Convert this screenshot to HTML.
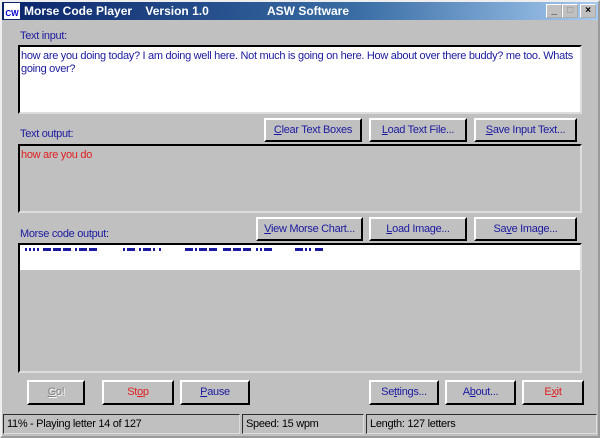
<!DOCTYPE html>
<html><head><style>
*{box-sizing:border-box;margin:0;padding:0}
body{width:600px;height:438px;background:#c0c0c0;font-family:"Liberation Sans",sans-serif;font-size:11px;letter-spacing:-0.3px;position:relative;overflow:hidden}
.a{position:absolute}
.win{left:0;top:0;width:600px;height:438px;border:2px outset #eee}
.title{left:2px;top:2px;width:596px;height:18px;background:linear-gradient(90deg,#0a246a,#3a6ea5 60%,#a6caf0);color:#fff;font-weight:bold;font-size:12px;line-height:18px;letter-spacing:0}
.lbl{color:#1a1aa0;font-size:11px}
.box{border:2px inset #ddd;border-top-color:#404040;border-left-color:#404040}
.btn{background:#c0c0c0;border:2px outset #fff;border-right-color:#404040;border-bottom-color:#404040;text-align:center;line-height:20px;color:#1a1aa0;font-size:11px}
.tb{width:16px;height:14px;top:4px;background:#c0c0c0;border:1px outset #fff;color:#000;font-size:10px;text-align:center;line-height:12px;font-weight:bold}
.sp{border:1px inset #ddd;border-top-color:#808080;border-left-color:#808080;top:414px;height:20px;line-height:18px;padding-left:3px;font-size:11px}
</style></head><body>
<div class="a win"></div>
<div class="a title"><span class="a" style="left:2px;top:1px;width:16px;height:16px;background:#fff;color:#00c;font-size:8px;line-height:22px;text-align:center">CW</span><span class="a" style="left:22px">Morse Code Player&nbsp;&nbsp;&nbsp; Version 1.0</span><span class="a" style="left:265px">ASW Software</span></div>
<div class="a tb" style="left:546px">_</div><div class="a tb" style="left:562px;color:#888">□</div><div class="a tb" style="left:580px">×</div>
<div class="a lbl" style="left:20px;top:30px">Text input:</div>
<div class="a box" style="left:18px;top:45px;width:564px;height:69px;background:#fff;color:#1a1aa0;padding:3px 1px;line-height:13px">how are you doing today? I am doing well here. Not much is going on here. How about over there buddy? me too. Whats going over?</div>
<div class="a btn" style="left:264px;top:118px;width:98px;height:24px"><u>C</u>lear Text Boxes</div>
<div class="a btn" style="left:369px;top:118px;width:98px;height:24px"><u>L</u>oad Text File...</div>
<div class="a btn" style="left:474px;top:118px;width:103px;height:24px"><u>S</u>ave Input Text...</div>
<div class="a lbl" style="left:20px;top:128px">Text output:</div>
<div class="a box" style="left:18px;top:144px;width:564px;height:69px;color:#e02020;padding:3px 1px">how are you do</div>
<div class="a btn" style="left:256px;top:217px;width:107px;height:24px"><u>V</u>iew Morse Chart...</div>
<div class="a btn" style="left:369px;top:217px;width:98px;height:24px"><u>L</u>oad Image...</div>
<div class="a btn" style="left:474px;top:217px;width:103px;height:24px">Sa<u>v</u>e Image...</div>
<div class="a lbl" style="left:20px;top:228px">Morse code output:</div>
<div class="a box" style="left:18px;top:243px;width:564px;height:130px"></div>
<div class="a" style="left:20px;top:245px;width:560px;height:25px;background:#fff"></div>
<svg class="a" style="left:20px;top:245px" width="320" height="12"><g fill="#1a1aa0">
<rect x="5" y="3" width="2" height="3"/><rect x="9" y="3" width="2" height="3"/><rect x="13" y="3" width="2" height="3"/><rect x="17" y="3" width="2" height="3"/>
<rect x="23" y="3" width="8" height="3"/><rect x="33" y="3" width="8" height="3"/><rect x="43" y="3" width="8" height="3"/>
<rect x="55" y="3" width="2" height="3"/><rect x="59" y="3" width="8" height="3"/><rect x="69" y="3" width="8" height="3"/>
<rect x="103" y="3" width="2" height="3"/><rect x="107" y="3" width="8" height="3"/><rect x="119" y="3" width="2" height="3"/><rect x="123" y="3" width="8" height="3"/><rect x="133" y="3" width="2" height="3"/><rect x="139" y="3" width="2" height="3"/>
<rect x="165" y="3" width="8" height="3"/><rect x="175" y="3" width="2" height="3"/><rect x="179" y="3" width="8" height="3"/><rect x="189" y="3" width="8" height="3"/>
<rect x="203" y="3" width="8" height="3"/><rect x="213" y="3" width="8" height="3"/><rect x="223" y="3" width="8" height="3"/>
<rect x="236" y="3" width="2" height="3"/><rect x="240" y="3" width="2" height="3"/><rect x="244" y="3" width="8" height="3"/>
<rect x="275" y="3" width="8" height="3"/><rect x="285" y="3" width="2" height="3"/><rect x="289" y="3" width="2" height="3"/><rect x="295" y="3" width="8" height="3"/>
</g></svg>
<div class="a btn" style="left:27px;top:380px;width:58px;height:25px;color:#808080;text-shadow:1px 1px #fff"><u>G</u>o!</div>
<div class="a btn" style="left:102px;top:380px;width:72px;height:25px;color:#e02020">St<u>o</u>p</div>
<div class="a btn" style="left:180px;top:380px;width:70px;height:25px"><u>P</u>ause</div>
<div class="a btn" style="left:369px;top:380px;width:70px;height:25px">Se<u>t</u>tings...</div>
<div class="a btn" style="left:445px;top:380px;width:71px;height:25px">A<u>b</u>out...</div>
<div class="a btn" style="left:522px;top:380px;width:62px;height:25px;color:#e02020">E<u>x</u>it</div>
<div class="a sp" style="left:3px;width:237px">11% - Playing letter 14 of 127</div>
<div class="a sp" style="left:242px;width:122px">Speed: 15 wpm</div>
<div class="a sp" style="left:366px;width:231px">Length: 127 letters</div>
</body></html>
